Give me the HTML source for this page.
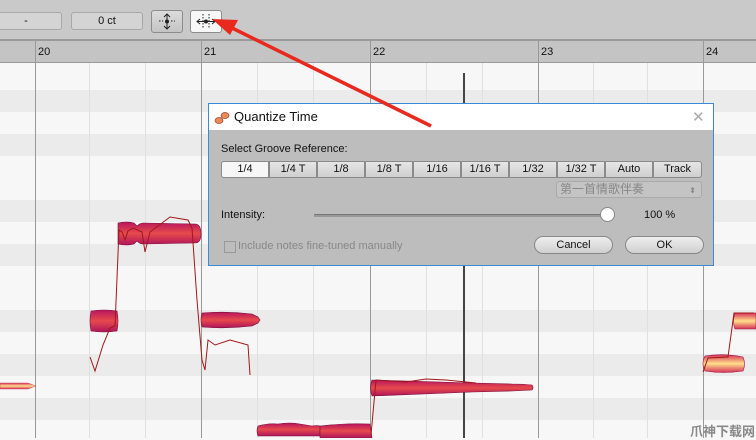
<!DOCTYPE html>
<html><head><meta charset="utf-8"><style>
*{margin:0;padding:0;box-sizing:border-box}
body{width:756px;height:438px;overflow:hidden;position:relative;background:#f7f7f7;font-family:"Liberation Sans","Noto Sans CJK SC",sans-serif;font-size:11px;color:#111}
.abs{position:absolute}
.tb{left:0;top:0;width:756px;height:41px;background:#c9c9c9;border-bottom:2px solid #9a9a9a}
.fld{top:12px;height:18px;background:#d4d4d4;border:1px solid #a8a8a8;border-radius:3px;text-align:center;line-height:16px;font-size:11px}
.btn{top:10px;height:23px;width:32px;border:1px solid #8c8c8c;border-radius:3px;background:linear-gradient(#dcdcdc,#c4c4c4)}
.ruler{left:0;top:41px;width:756px;height:22px;background:#c4c4c4;border-bottom:1px solid #999}
.num{top:46px;font-size:11px}
.row{left:0;width:756px;height:22px;background:#ebebeb}
.vl{top:63px;width:1px;height:375px;background:#e0e0e0}
.bl{top:41px;width:1px;height:397px;background:#999}
.dlg{left:208px;top:103px;width:506px;height:163px;border:1px solid #3a8ad8;background:#bdbdbd}
.title{left:0;top:0;width:504px;height:26px;background:#fff;font-size:13px;line-height:26px;padding-left:25px}
.seg{top:57px;height:17px;width:48px;border:1px solid #8a8a8a;background:linear-gradient(#e6e6e6,#cfcfcf);text-align:center;line-height:15px;font-size:11px}
.pill{top:132px;height:18px;border:1px solid #888;border-radius:9px;background:linear-gradient(#eee,#cfcfcf);text-align:center;line-height:16px;font-size:11px}
</style></head><body>
<div class="abs row" style="top:90px"></div>
<div class="abs row" style="top:134px"></div>
<div class="abs row" style="top:200px"></div>
<div class="abs row" style="top:244px"></div>
<div class="abs row" style="top:310px"></div>
<div class="abs row" style="top:354px"></div>
<div class="abs row" style="top:398px"></div>
<div class="abs vl" style="left:89px"></div><div class="abs vl" style="left:145px"></div>
<div class="abs vl" style="left:257px"></div><div class="abs vl" style="left:313px"></div>
<div class="abs vl" style="left:426px"></div><div class="abs vl" style="left:482px"></div>
<div class="abs vl" style="left:593px"></div><div class="abs vl" style="left:647px"></div>
<div class="abs tb"></div>
<div class="abs fld" style="left:-10px;width:72px">-</div>
<div class="abs fld" style="left:71px;width:72px">0 ct</div>
<div class="abs btn" style="left:151px"><svg width="30" height="21"><g stroke="#222" fill="none"><line x1="15" y1="3" x2="15" y2="18"/><path d="M12 6l3-3 3 3M12 15l3 3 3-3"/><line x1="7" y1="10" x2="11" y2="10" stroke-dasharray="1.5 1.5"/><line x1="19" y1="10" x2="23" y2="10" stroke-dasharray="1.5 1.5"/></g><circle cx="15" cy="10.5" r="2" fill="#222"/></svg></div>
<div class="abs btn" style="left:190px;background:#f7f7f7"><svg width="30" height="21"><g stroke="#222" fill="none"><line x1="6" y1="10.5" x2="24" y2="10.5"/><path d="M9 8l-3 2.5 3 2.5M21 8l3 2.5-3 2.5"/><line x1="12" y1="3" x2="12" y2="18" stroke-dasharray="1.5 1.5"/><line x1="18" y1="3" x2="18" y2="18" stroke-dasharray="1.5 1.5"/></g><circle cx="15" cy="10.5" r="2" fill="#222"/></svg></div>
<div class="abs ruler"></div>
<div class="abs bl" style="left:35px"></div><div class="abs bl" style="left:201px"></div>
<div class="abs bl" style="left:370px"></div><div class="abs bl" style="left:538px"></div><div class="abs bl" style="left:703px"></div>
<div class="abs" style="left:463px;top:73px;width:2px;height:365px;background:#444"></div>
<div class="abs num" style="left:38px">20</div><div class="abs num" style="left:204px">21</div>
<div class="abs num" style="left:373px">22</div><div class="abs num" style="left:541px">23</div><div class="abs num" style="left:706px">24</div>
<svg class="abs" style="left:0;top:0" width="756" height="438">
<defs><linearGradient id="g" x1="0" y1="0" x2="0" y2="1"><stop offset="0" stop-color="#b8155e"/><stop offset=".5" stop-color="#e64a4c"/><stop offset="1" stop-color="#b0145c"/></linearGradient>
<linearGradient id="y" x1="0" y1="0" x2="0" y2="1"><stop offset="0" stop-color="#d7305a"/><stop offset=".5" stop-color="#ffe08a"/><stop offset="1" stop-color="#d7305a"/></linearGradient></defs>
<g fill="url(#g)" stroke="#7a0f3a" stroke-width=".6">
<path d="M118 223q8-2 16 0l3 3q3-3 6-3l52 1q6 0 6 10q0 9-6 9l-52 1q-3 0-6-3l-3 3q-8 2-16 0z"/>
<path d="M91 311q13-2 26 0q2 10 0 20q-13 2-26 0q-2-10 0-20z"/>
<path d="M202 313q25-2 50 1l6 3l2 3l-2 3l-6 3q-25 3-50 1q-2-7 0-14z"/>
<path d="M372 380l100 3l40 1q12 0 20 1q2 3 0 5l-20 1l-40 1l-100 4q-3-8 0-16z"/>
<path d="M258 426q10-3 20-2q12-2 22 0l12 2q5-1 8 0l0 10l-62 0q-2-5 0-10z"/>
<path d="M320 426q25-3 50-2l2 14l-52 0z"/>
</g>
<path d="M0 383h28l8 3-8 3h-28z" fill="url(#y)" stroke="#c03050" stroke-width=".4"/>
<path d="M705 356q18-3 38 1q3 7 0 14q-20 3-38 0q-4-7 0-15z" fill="url(#y)" stroke="#a01040" stroke-width=".6"/>
<path d="M735 313h21v16h-21q-3-8 0-16z" fill="url(#y)" stroke="#a01040" stroke-width=".6"/>
<g fill="none" stroke="#a01818" stroke-width="1">
<path d="M90 357L95 371L103 345L110 328L115 326L119 230L122 232L125 240L128 231L133 228L142 232L145 252L150 232L170 217L188 220L192 228L197 300L202 360L205 370L208 340L215 345L230 340L248 345L250 375"/>
<path d="M371 435l5-55 30 2 20-3 20 1 30 3"/>
<path d="M703 372l5-14 20-1 6-44 20 0"/>
</g>
</svg>
<div class="abs dlg">
<div class="abs title">Quantize Time</div>
<svg class="abs" style="left:5px;top:7px" width="16" height="14"><ellipse cx="5" cy="9.5" rx="4" ry="3" fill="#e88a5a" stroke="#a04020" stroke-width=".7"/><ellipse cx="11" cy="4.5" rx="4" ry="3" fill="#e88a5a" stroke="#a04020" stroke-width=".7"/></svg>
<div class="abs" style="left:483px;top:4px;font-size:15px;color:#aaa">✕</div>
<div class="abs" style="left:12px;top:39px">Select Groove Reference:</div>
<div class="abs seg" style="left:12px;background:#f7f7f7;border-radius:3px 0 0 3px">1/4</div>
<div class="abs seg" style="left:60px">1/4 T</div>
<div class="abs seg" style="left:108px">1/8</div>
<div class="abs seg" style="left:156px">1/8 T</div>
<div class="abs seg" style="left:204px">1/16</div>
<div class="abs seg" style="left:252px">1/16 T</div>
<div class="abs seg" style="left:300px">1/32</div>
<div class="abs seg" style="left:348px">1/32 T</div>
<div class="abs seg" style="left:396px">Auto</div>
<div class="abs seg" style="left:444px;width:49px;border-radius:0 3px 3px 0">Track</div>
<div class="abs" style="left:347px;top:77px;width:146px;height:17px;border:1px solid #aaa;border-radius:3px;background:#c4c4c4;color:#888;font-size:12px;line-height:15px;padding-left:3px">第一首情歌伴奏<span style="position:absolute;right:5px;font-size:8px;top:1px">⬍</span></div>
<div class="abs" style="left:12px;top:105px">Intensity:</div>
<div class="abs" style="left:105px;top:110px;width:292px;height:3px;background:#999;border-top:1px solid #777"></div>
<div class="abs" style="left:391px;top:103px;width:15px;height:15px;border-radius:50%;background:#fff;border:1px solid #888"></div>
<div class="abs" style="left:435px;top:105px">100 %</div>
<div class="abs" style="left:15px;top:137px;width:12px;height:12px;border:1px solid #999"></div>
<div class="abs" style="left:29px;top:136px;color:#888">Include notes fine-tuned manually</div>
<div class="abs pill" style="left:325px;width:79px">Cancel</div>
<div class="abs pill" style="left:416px;width:79px">OK</div>
</div>
<svg class="abs" style="left:0;top:0" width="756" height="438"><line x1="431" y1="126" x2="228" y2="26" stroke="#e8291e" stroke-width="3.5"/><path d="M212 19l26 1-8 15z" fill="#e8291e"/></svg>
<div class="abs" style="left:690px;top:421px;font-size:13px;color:#888;font-weight:bold;white-space:nowrap">爪神下载网</div>
</body></html>
